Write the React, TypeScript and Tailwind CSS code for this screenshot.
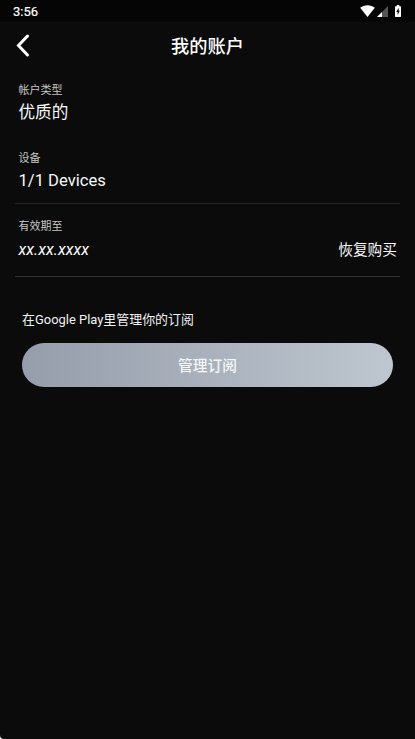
import React from "react";

type FieldProps = {
  label: string;
  children: React.ReactNode;
};

function Field({ label, children }: FieldProps) {
  return (
    <div className="h-[68px] pl-[3.500px] pr-[3px] pt-[2px]">
      <p className="text-[11px] leading-[16px] text-[#c4c4c4]">{label}</p>
      <div className="mt-[1px] text-[16.6px] leading-[26px] text-[#f8f8f8]">{children}</div>
    </div>
  );
}

function StatusBar() {
  return (
    <div className="flex h-[22px] items-center justify-between bg-[#050505] pl-[13px] pr-[14px]">
      <span className="pt-[2px] text-[13px] leading-[20px] text-white [-webkit-text-stroke:0.2px_white]">3:56</span>
      <div className="flex items-center text-white">
        {/* Wifi */}
        <svg width="15" height="12" viewBox="0 0 15 12" fill="currentColor">
          <path d="M7.500 12L0.200 2.800C2.300 1.200 4.700 0.300 7.500 0.300s5.200 0.900 7.300 2.500z" />
        </svg>
        {/* Signal */}
        <svg className="ml-[2px]" width="11" height="12" viewBox="0 0 11 12">
          <path d="M0 12L11 1v11z" fill="#555" />
          <path d="M0 12L5 7v5z" fill="#fff" />
        </svg>
        {/* Battery */}
        <svg className="ml-[7px]" width="6" height="12" viewBox="0 0 7 13" preserveAspectRatio="none">
          <path d="M2 0h3v1.300H6.300a.7.7 0 0 1 .7.7v10.200a.7.7 0 0 1-.7.7H.7a.7.7 0 0 1-.7-.7V2a.7.7 0 0 1 .7-.7H2z" fill="#fff" />
          <path d="M4.300 3L1.500 7.500h1.600v3.300L5.500 6.200H4.300z" fill="#000" />
        </svg>
      </div>
    </div>
  );
}

export default function App() {
  return (
    <div className="flex h-[739px] w-full flex-col overflow-hidden rounded-bl-[4px] bg-[#0b0b0b] font-[Roboto,'Noto_Sans_CJK_SC',sans-serif]">
      <StatusBar />

      <header className="grid h-[59px] grid-cols-[48px_1fr_48px] pt-[12px]">
        <button className="flex h-[23px] items-center pl-[16px]" aria-label="Back">
          <svg width="14" height="23" viewBox="0 0 14 23" fill="none" stroke="#fff" strokeWidth="3">
            <path d="M11.500 2L2.500 11.500L11.500 21" strokeLinecap="round" />
          </svg>
        </button>
        <h1 className="text-center text-[18.2px] font-medium leading-[26px] text-white">我的账户</h1>
      </header>

      <main className="px-[15px]">
        <Field label="帐户类型">优质的</Field>
        <div className="h-[55px] border-b border-[#242424]">
          <Field label="设备">1/1 Devices</Field>
        </div>
        <div className="mt-[13px] h-[60px] border-b border-[#333]">
          <Field label="有效期至">
            <div className="flex items-center justify-between">
              <span className="text-[16.2px] italic">xx.xx.xxxx</span>
              <button className="pt-px text-[14.7px]">恢复购买</button>
            </div>
          </Field>
        </div>
      </main>

      <section className="px-[22px] pt-[33px]">
        <p className="text-[12.95px] leading-[20px] text-[#f2f2f2]">在Google Play里管理你的订阅</p>
        <button className="mt-[13px] flex h-[44px] w-full items-center justify-center rounded-full bg-linear-to-r from-[#969dab] to-[#bec6cf] pt-[2px] text-[14.7px] font-medium text-[#f5f6f8]">
          管理订阅
        </button>
      </section>
    </div>
  );
}
